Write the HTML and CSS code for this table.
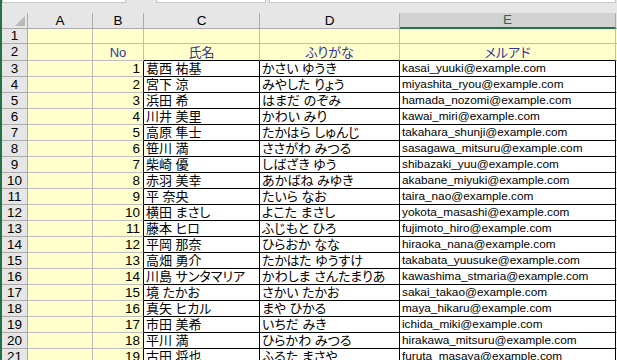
FILE: index.html
```html
<!DOCTYPE html>
<html lang="ja">
<head>
<meta charset="utf-8">
<link rel="stylesheet" href="styles.css">
</head>
<body>
<div class="app">
  <div class="toolbar">
    <div class="box b1"></div>
    <div class="box b2"></div>
    <div class="box b3"></div>
  </div>
  <div class="sheet">
    <div class="row hdr">
      <div class="c rh corner"><span class="tri"></span></div>
      <div class="c ch">A</div>
      <div class="c ch">B</div>
      <div class="c ch">C</div>
      <div class="c ch">D</div>
      <div class="c ch sel">E</div>
      <div class="c ch rest"></div>
    </div>
    <div class="row r1">
      <div class="c rh">1</div>
      <div class="c y"></div><div class="c y"></div><div class="c y"></div><div class="c y"></div><div class="c y"></div><div class="c y rest"></div>
    </div>
    <div class="row r2">
      <div class="c rh">2</div>
      <div class="c y"></div>
      <div class="c y th">No</div>
      <div class="c y th tb jp">氏名</div>
      <div class="c y th tb jp">ふりがな</div>
      <div class="c y th tb jp">メルアド</div>
      <div class="c y rest"></div>
    </div>
  </div>
  <div class="sheet" id="data"></div>
</div>
<script src="app.js"></script>
</body>
</html>
```
FILE: app.js
```js
const rows = [
  ["葛西 祐基","かさい ゆうき","kasai_yuuki@example.com"],
  ["宮下 涼","みやした りょう","miyashita_ryou@example.com"],
  ["浜田 希","はまだ のぞみ","hamada_nozomi@example.com"],
  ["川井 美里","かわい みり","kawai_miri@example.com"],
  ["高原 隼士","たかはら しゅんじ","takahara_shunji@example.com"],
  ["笹川 満","ささがわ みつる","sasagawa_mitsuru@example.com"],
  ["柴崎 優","しばざき ゆう","shibazaki_yuu@example.com"],
  ["赤羽 美幸","あかばね みゆき","akabane_miyuki@example.com"],
  ["平 奈央","たいら なお","taira_nao@example.com"],
  ["横田 まさし","よこた まさし","yokota_masashi@example.com"],
  ["藤本 ヒロ","ふじもと ひろ","fujimoto_hiro@example.com"],
  ["平岡 那奈","ひらおか なな","hiraoka_nana@example.com"],
  ["高畑 勇介","たかはた ゆうすけ","takabata_yuusuke@example.com"],
  ["川島 サンタマリア","かわしま さんたまりあ","kawashima_stmaria@example.com"],
  ["境 たかお","さかい たかお","sakai_takao@example.com"],
  ["真矢 ヒカル","まや ひかる","maya_hikaru@example.com"],
  ["市田 美希","いちだ みき","ichida_miki@example.com"],
  ["平川 満","ひらかわ みつる","hirakawa_mitsuru@example.com"],
  ["古田 将也","ふるた まさや","furuta_masaya@example.com"]
];
const data = document.getElementById("data");
rows.forEach((r, i) => {
  const row = document.createElement("div");
  row.className = "row dr";
  row.innerHTML =
    '<div class="c rh">' + (i + 3) + '</div>' +
    '<div class="c y"></div>' +
    '<div class="c y num">' + (i + 1) + '</div>' +
    '<div class="c d jp">' + r[0] + '</div>' +
    '<div class="c d jp">' + r[1] + '</div>' +
    '<div class="c d mail">' + r[2] + '</div>' +
    '<div class="c w rest"></div>';
  data.appendChild(row);
});
```
FILE: styles.css
```css
* { box-sizing: border-box; margin: 0; padding: 0; }
html, body { width: 617px; height: 360px; overflow: hidden; background: #fff; }
body {
  font-family: "Liberation Sans", "Noto Sans CJK JP", sans-serif;
  font-size: 13px;
  color: #000;
}
.app {
  border-left: 2px solid #217346;
  height: 360px;
  overflow: hidden;
}
.toolbar {
  height: 13px;
  background: #e6e6e6;
  display: flex;
  align-items: flex-start;
}
.box {
  height: 3px;
  background: #fff;
  border: 1px solid #c6c6c6;
  border-top: none;
}
.b1 { width: 124px; }
.b2 { width: 110px; margin-left: 30px; }
.b3 { width: 347px; margin-left: 3px; }

.row {
  display: grid;
  grid-template-columns: 26px 65px 51px 116px 140px 216px 1fr;
}
.hdr { height: 16px; }
.r1 { height: 15px; }
.r2 { height: 17px; }
.dr { height: 16px; }

.c {
  border-right: 1px solid #bcbcbc;
  border-bottom: 1px solid #bcbcbc;
  overflow: hidden;
  white-space: nowrap;
  display: flex;
  align-items: flex-end;
  padding: 0 2px;
  line-height: 15px;
}
.jp { font-feature-settings: "palt" 1; }
.rh {
  background: #e6e6e6;
  border-right-color: #ababab;
  border-bottom-color: #ababab;
  justify-content: center;
  align-items: center;
  line-height: 14px;
  font-size: 13.5px;
}
.corner { position: relative; }
.tri {
  position: absolute;
  right: 2px;
  bottom: 2px;
  width: 0; height: 0;
  border-left: 10px solid transparent;
  border-bottom: 10px solid #b9b9b9;
}
.ch {
  background: #e6e6e6;
  border-right-color: #ababab;
  border-bottom-color: #ababab;
  justify-content: center;
  align-items: center;
  line-height: 14px;
  font-size: 13.5px;
}
.ch.sel {
  background: #d2d2d2;
  color: #217346;
  border-bottom: 2px solid #217346;
}
.ch.rest { border-right: none; }
.y { background: #ffffcc; }
.rest { border-right: none; }
.w { background: #fff; }
.th {
  color: #333399;
  justify-content: center;
}
.tb { border-bottom-color: #000; }
.num {
  justify-content: flex-end;
  padding-right: 3px;
  border-right-color: #000;
  font-size: 13.5px;
}
.d {
  background: #fff;
  border-right-color: #000;
  border-bottom-color: #000;
}
.mail { font-size: 11.8px; }
.r2 .c:nth-child(4), .r2 .c:nth-child(5), .r2 .c:nth-child(6) { border-right-color: #bcbcbc; }
```
